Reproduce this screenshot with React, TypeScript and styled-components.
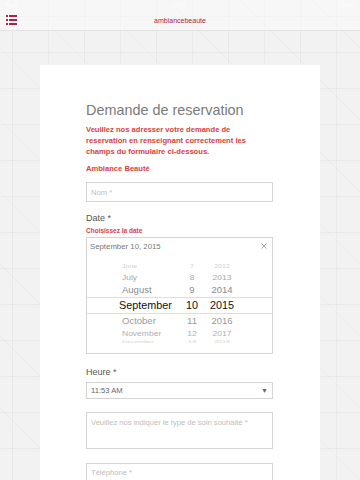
import React from 'react'
import styled, { createGlobalStyle } from 'styled-components'

const GlobalStyle = createGlobalStyle`
	html, body {
		margin: 0;
		padding: 0;
	}
	body {
		font-family: "Liberation Sans", Arial, sans-serif;
		background-color: #f2f2f2;
	}
	#root {
		height: 480px;
		overflow: hidden;
	}
`

const Page = styled.div`
	width: 360px;
	height: 480px;
	overflow: hidden;
	display: flex;
	flex-direction: column;
	background-color: #f2f2f2;
	background-image:
		linear-gradient(to right, rgba(0, 0, 0, 0.04) 1px, transparent 1px),
		linear-gradient(to bottom, rgba(0, 0, 0, 0.04) 1px, transparent 1px),
		repeating-linear-gradient(45deg, transparent 0 50px, rgba(0, 0, 0, 0.018) 50px 51px);
	background-size: 36px 36px, 36px 36px, auto;
	background-position: 12px 16px, 12px 16px, 0 0;
`

const StatusBar = styled.div`
	flex-shrink: 0;
	height: 10px;
	display: flex;
	align-items: center;
	justify-content: space-between;
	padding: 0 5px;
	font-size: 6px;
	color: rgba(255, 255, 255, 0.9);
	background-color: rgba(250, 250, 250, 0.6);
`

const NavBar = styled.div`
	flex-shrink: 0;
	height: 20px;
	display: flex;
	align-items: center;
	justify-content: center;
	position: relative;
	background-color: rgba(250, 250, 250, 0.6);
	border-bottom: 1px solid #e2e2e2;
`

const MenuButton = styled.div`
	position: absolute;
	left: 6px;
	top: 5px;
	width: 11px;
	height: 10px;
	display: flex;
`

const NavTitle = styled.div`
	font-size: 7px;
	color: #a8254d;
`

const Card = styled.div`
	flex-shrink: 0;
	margin: 34px 0 0 40px;
	width: 280px;
	min-height: 440px;
	background-color: #ffffff;
	padding: 37px 47px 0 46px;
	box-sizing: border-box;
	display: flex;
	flex-direction: column;
`

const Title = styled.h1`
	margin: 0;
	font-size: 14.4px;
	line-height: 17px;
	font-weight: normal;
	color: #7a7a7a;
`

const RedText = styled.p<{ $top: number }>`
	margin: ${p => p.$top}px 0 0 0;
	font-size: 7.6px;
	line-height: 11px;
	font-weight: bold;
	color: #d8413f;
`

const Field = styled.div<{ $height: number; $top: number }>`
	flex-shrink: 0;
	margin-top: ${p => p.$top}px;
	height: ${p => p.$height}px;
	border: 1px solid #d4d4d4;
	box-sizing: border-box;
	display: flex;
	align-items: ${p => (p.$height > 24 ? 'flex-start' : 'center')};
	justify-content: space-between;
	padding: ${p => (p.$height > 24 ? '5px 4px' : '0 4px')};
	font-size: 7.6px;
	color: #bdbdbd;
`

const Label = styled.div<{ $top: number }>`
	margin-top: ${p => p.$top}px;
	font-size: 9px;
	line-height: 11px;
	color: #555;
`

const Hint = styled.div`
	margin-top: 2.5px;
	font-size: 6.5px;
	line-height: 8px;
	font-weight: bold;
	color: #d8413f;
`

const DateBox = styled.div`
	flex-shrink: 0;
	margin-top: 2px;
	border: 1px solid #d4d4d4;
	height: 117px;
	box-sizing: border-box;
	display: flex;
	flex-direction: column;
`

const DateHeader = styled.div`
	flex-shrink: 0;
	height: 17px;
	display: flex;
	align-items: center;
	justify-content: space-between;
	padding: 0 5px 0 3px;
	font-size: 7.8px;
	color: #777;
`

const Wheel = styled.div`
	padding-top: 7px;
	display: flex;
	flex-direction: column;
`

const WheelRow = styled.div<{ $h: number; $size: number; $color: string; $selected?: boolean; $squash?: number }>`
	flex-shrink: 0;
	height: ${p => p.$h}px;
	display: grid;
	grid-template-columns: 61px 24px 36px;
	padding-left: 32px;
	align-items: center;
	font-size: ${p => p.$size}px;
	color: ${p => p.$color};
	border-top: ${p => (p.$selected ? '1px solid #dedede' : 'none')};
	border-bottom: ${p => (p.$selected ? '1px solid #dedede' : 'none')};
	box-sizing: border-box;
	overflow: hidden;
	& > span {
		display: block;
		transform: scaleY(${p => p.$squash ?? 1});
		white-space: nowrap;
	}
	& > span:first-child {
		padding-left: ${p => (p.$selected ? 0 : 3)}px;
	}
	& > span:not(:first-child) {
		text-align: center;
	}
`

const TimeText = styled.span`
	color: #666;
`

const Arrow = styled.span`
	color: #666;
	font-size: 7px;
`

const MenuIcon = () => (
	<svg width="11" height="10" viewBox="0 0 11 10">
		<g fill="#a8254d">
			<rect x="0" y="0" width="2" height="2" />
			<rect x="3" y="0" width="8" height="2" />
			<rect x="0" y="4" width="2" height="2" />
			<rect x="3" y="4" width="8" height="2" />
			<rect x="0" y="8" width="2" height="2" />
			<rect x="3" y="8" width="8" height="2" />
		</g>
	</svg>
)

const ClearIcon = () => (
	<svg width="6" height="6" viewBox="0 0 6 6">
		<path d="M0.5 0.5 L5.5 5.5 M5.5 0.5 L0.5 5.5" stroke="#999" strokeWidth="0.9" />
	</svg>
)

type WheelItem = {
	month: string
	day: string
	year: string
	h: number
	size: number
	color: string
	selected?: boolean
	squash?: number
}

const wheel: WheelItem[] = [
	{ month: 'June', day: '7', year: '2012', h: 10, size: 7, color: '#cfcfcf', squash: 0.7 },
	{ month: 'July', day: '8', year: '2013', h: 11, size: 8.5, color: '#a8a8a8', squash: 0.85 },
	{ month: 'August', day: '9', year: '2014', h: 14, size: 9.5, color: '#8a8a8a' },
	{ month: 'September', day: '10', year: '2015', h: 17, size: 10.8, color: '#111', selected: true },
	{ month: 'October', day: '11', year: '2016', h: 14, size: 9.5, color: '#9a9a9a' },
	{ month: 'November', day: '12', year: '2017', h: 10, size: 8.5, color: '#b0b0b0', squash: 0.85 },
	{ month: 'December', day: '13', year: '2018', h: 8, size: 7, color: '#d2d2d2', squash: 0.6 },
]

const App: React.FC = () => {
	return (
		<Page>
			<GlobalStyle />
			<StatusBar>
				<span>iPad</span>
				<span>10:53</span>
				<span>100%</span>
			</StatusBar>
			<NavBar>
				<MenuButton>
					<MenuIcon />
				</MenuButton>
				<NavTitle>ambiancebeaute</NavTitle>
			</NavBar>
			<Card>
				<Title>Demande de reservation</Title>
				<RedText $top={4.5}>
					Veuillez nos adresser votre demande de reservation en renseignant correctement les champs du formulaire ci-dessous.
				</RedText>
				<RedText $top={6}>Ambiance Beauté</RedText>
				<Field $height={20} $top={8.5}>Nom *</Field>
				<Label $top={11}>Date *</Label>
				<Hint>Choisissez la date</Hint>
				<DateBox>
					<DateHeader>
						<span>September 10, 2015</span>
						<ClearIcon />
					</DateHeader>
					<Wheel>
						{wheel.map(w => (
							<WheelRow
								key={w.month}
								$h={w.h}
								$size={w.size}
								$color={w.color}
								$selected={w.selected}
								$squash={w.squash}
							>
								<span>{w.month}</span>
								<span>{w.day}</span>
								<span>{w.year}</span>
							</WheelRow>
						))}
					</Wheel>
				</DateBox>
				<Label $top={13.5}>Heure *</Label>
				<Field $height={17} $top={3.5}>
					<TimeText>11:53 AM</TimeText>
					<Arrow>▼</Arrow>
				</Field>
				<Field $height={37} $top={13}>Veuillez nos indiquer le type de soin souhaité *</Field>
				<Field $height={20} $top={14}>Téléphone *</Field>
			</Card>
		</Page>
	)
}

export default App
